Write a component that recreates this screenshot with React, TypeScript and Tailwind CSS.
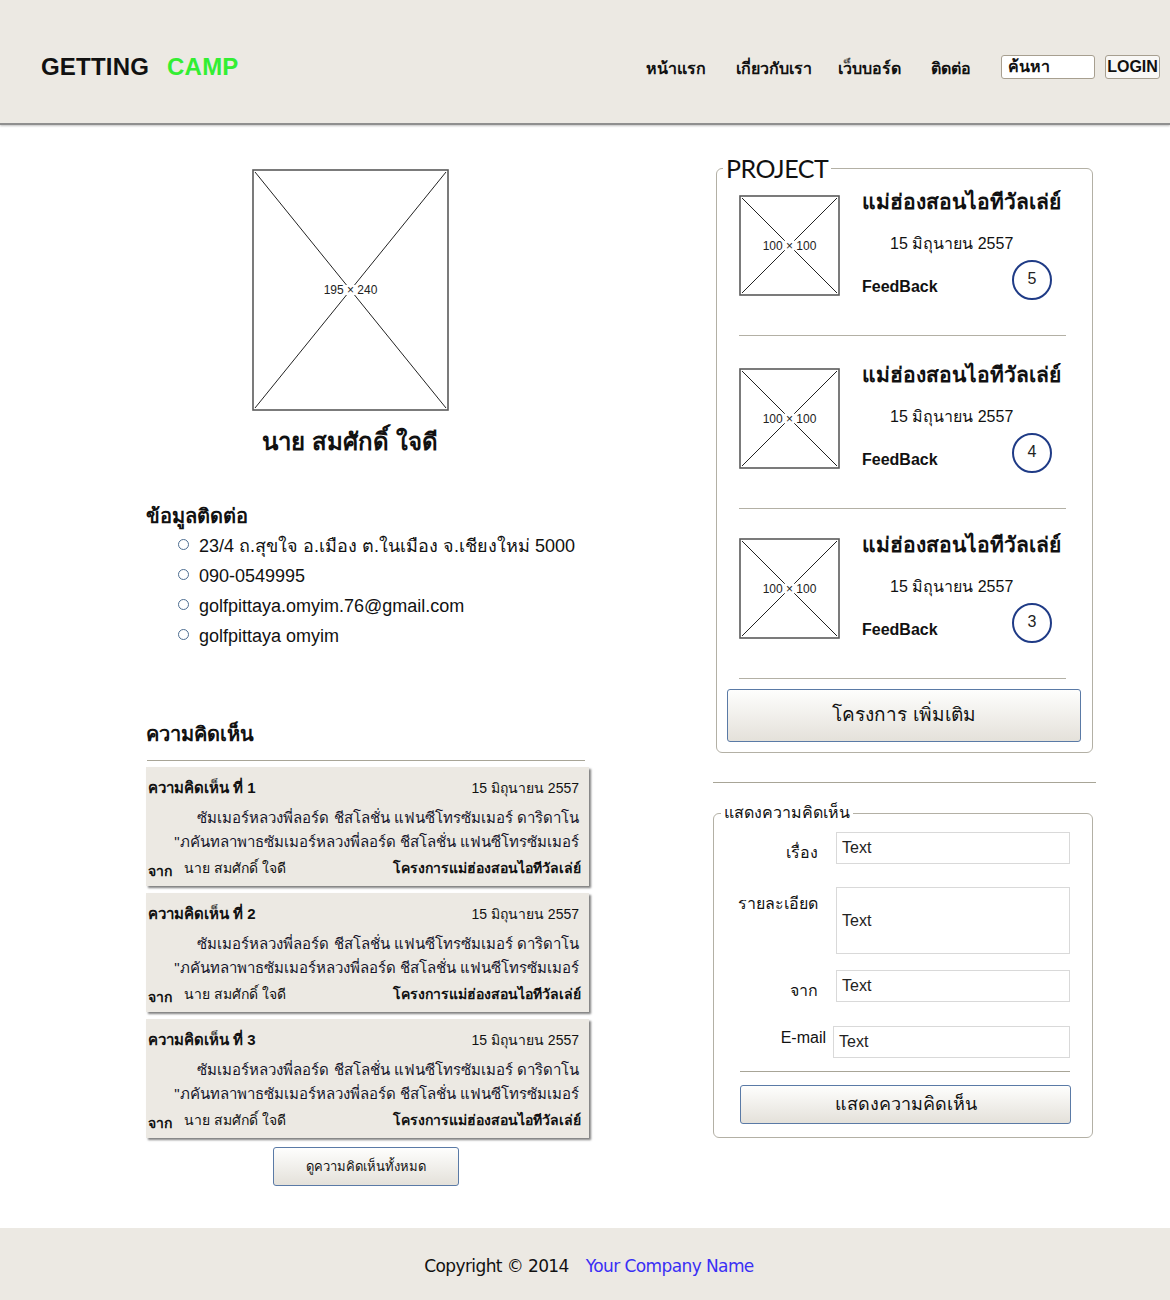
import React from "react";

const Placeholder = ({ w, h, label }: { w: number; h: number; label: string }) => (
  <svg width={w} height={h} viewBox={`0 0 ${w} ${h}`} className="block shrink-0">
    <rect x="1" y="1" width={w - 2} height={h - 2} fill="white" stroke="#5a5a5a" strokeWidth="1.6" />
    <line x1="3" y1="3" x2={w - 3} y2={h - 3} stroke="#222" strokeWidth="1" />
    <line x1={w - 3} y1="3" x2="3" y2={h - 3} stroke="#222" strokeWidth="1" />
    <rect x={w / 2 - 5} y={h / 2 - 5} width="10" height="10" fill="white" />
    <text x={w / 2} y={h / 2 + 4} textAnchor="middle" fontSize="12" fontFamily="'Liberation Sans', sans-serif" fill="#222">
      {label}
    </text>
  </svg>
);

const Counter = ({ n }: { n: number }) => (
  <div className="w-[40px] h-[40px] rounded-full border-2 border-[#1f3b86] flex items-center justify-center text-[16px] leading-none pb-[3px] font-['Liberation_Sans',sans-serif] text-[#222]">
    {n}
  </div>
);

const ProjectItem = ({ n }: { n: number }) => (
  <div className="flex items-start h-[111px] ml-[22px]">
    <div className="mt-[8px]">
      <Placeholder w={101} h={101} label="100 × 100" />
    </div>
    <div className="ml-[22px] mt-[2px] w-[190px]">
      <div className="text-[21px] leading-[26px] font-bold text-[#111] whitespace-nowrap">แม่ฮ่องสอนไอทีวัลเล่ย์</div>
      <div className="mt-[18px] ml-[28px] text-[16px] leading-[22px] font-['Liberation_Sans',sans-serif] text-[#111]">15 มิถุนายน 2557</div>
      <div className="mt-[5px] flex justify-between">
        <div className="mt-[17px] text-[16px] leading-[20px] font-bold font-['Liberation_Sans',sans-serif] text-[#111]">FeedBack</div>
        <Counter n={n} />
      </div>
    </div>
  </div>
);

const CommentCard = ({ n }: { n: number }) => (
  <div className="bg-[#ece9e3] shadow-[2px_2px_2px_rgba(0,0,0,0.5)] pt-[12px] pb-[6px] pl-[2px] pr-[8px] text-[#111] whitespace-nowrap">
    <div className="flex justify-between text-[14px] leading-[18px] pr-[2px]">
      <span className="font-bold text-[15px]">ความคิดเห็น ที่ {n}</span>
      <span className="font-['Liberation_Sans',sans-serif]">15 มิถุนายน 2557</span>
    </div>
    <div className="mt-[9px] text-[15px] leading-[24px] text-right pr-[2px] text-[#15152a]">
      <div>ซัมเมอร์หลวงพี่ลอร์ด ชีสโลชั่น แฟนซีโทรซัมเมอร์ ดาริดาโน</div>
      <div>"ภคันทลาพาธซัมเมอร์หลวงพี่ลอร์ด ชีสโลชั่น แฟนซีโทรซัมเมอร์</div>
    </div>
    <div className="mt-[5px] flex justify-between text-[14px] leading-[18px]">
      <div className="flex">
        <span className="font-bold mt-[3px]">จาก</span>
        <span className="ml-[12px]">นาย สมศักดิ์ ใจดี</span>
      </div>
      <span className="font-bold">โครงการแม่ฮ่องสอนไอทีวัลเล่ย์</span>
    </div>
  </div>
);

const Field = ({ label, h = 32, labelW = 104, gap = 18, labelMt }: { label: string; h?: number; labelW?: number; gap?: number; labelMt: string }) => (
  <div className="flex">
    <div style={{ width: labelW }} className={`text-right text-[16px] leading-[22px] text-[#111] ${labelMt}`}>
      {label}
    </div>
    <div
      style={{ marginLeft: gap, width: 1070 - 714 - labelW - gap, height: h }}
      className="bg-white border border-[#d9d9d9] px-[5px] flex items-center text-[16px] font-['Liberation_Sans',sans-serif] text-[#222]"
    >
      Text
    </div>
  </div>
);

const BlueButton = ({ children, className }: { children: React.ReactNode; className: string }) => (
  <button className={`border border-[#5a7aa6] rounded-[3px] bg-linear-to-b from-[#fefefd] to-[#e4e1da] text-[#111] flex items-center justify-center ${className}`}>
    {children}
  </button>
);

export default function App() {
  return (
    <div className="w-[1170px] min-h-[1300px] bg-white font-[Tahoma,'Liberation_Sans','Noto_Sans',sans-serif] text-[#111]">
      {/* header */}
      <header className="h-[125px] bg-[#ece9e3] border-b-[2px] border-[#8f8f8f] shadow-[0_1px_2px_rgba(0,0,0,0.25)] flex items-center pt-[10px] pl-[41px] pr-[10px]">
        <div className="flex gap-[18px] text-[24px] font-bold font-['Liberation_Sans',sans-serif] tracking-[0.2px]">
          <span className="text-[#111]">GETTING</span>
          <span className="text-[#33ee33]">CAMP</span>
        </div>
        <nav className="ml-auto flex items-center text-[16px] font-bold text-[#111]">
          <a className="mr-[30px] pt-[4px]">หน้าแรก</a>
          <a className="mr-[26px] pt-[4px]">เกี่ยวกับเรา</a>
          <a className="mr-[30px] pt-[4px]">เว็บบอร์ด</a>
          <a className="mr-[30px] pt-[4px]">ติดต่อ</a>
          <div className="w-[94px] h-[24px] bg-white border border-[#a79f90] rounded-[3px] pl-[6px] flex items-center text-[16px] font-bold">ค้นหา</div>
          <div className="ml-[10px] w-[55px] h-[24px] bg-[#f9f8f6] border border-[#a79f90] rounded-[3px] flex items-center justify-center text-[16px] font-bold font-['Liberation_Sans',sans-serif]">
            LOGIN
          </div>
        </nav>
      </header>

      <main className="flex pl-[146px] pb-[42px]">
        {/* left column */}
        <div className="w-[444px]">
          <div className="w-[408px] flex flex-col items-center mt-[44px]">
            <Placeholder w={197} h={242} label="195 × 240" />
            <div className="mt-[15px] text-[24px] leading-[32px] font-bold">นาย สมศักดิ์ ใจดี</div>
          </div>

          <div className="mt-[45px] text-[20px] leading-[26px] font-bold">ข้อมูลติดต่อ</div>
          <ul className="mt-[2px] ml-[32px]">
            {["23/4 ถ.สุขใจ อ.เมือง ต.ในเมือง จ.เชียงใหม่ 5000", "090-0549995", "golfpittaya.omyim.76@gmail.com", "golfpittaya omyim"].map((t) => (
              <li key={t} className="flex items-center h-[30px] text-[18px]">
                <span className="w-[11px] h-[11px] rounded-full border-[1.5px] border-[#4d6d90] mb-[3px]" />
                <span className="ml-[10px]">{t}</span>
              </li>
            ))}
          </ul>

          <div className="mt-[70px] text-[20px] leading-[26px] font-bold">ความคิดเห็น</div>
          <div className="mt-[13px] h-px bg-[#a8a597] w-[438px] ml-px" />
          <div className="mt-[6px] flex flex-col gap-[7px] w-[443px]">
            {[1, 2, 3].map((n) => (
              <CommentCard key={n} n={n} />
            ))}
          </div>
          <BlueButton className="mt-[9px] ml-[127px] w-[186px] h-[39px] text-[13px]">ดูความคิดเห็นทั้งหมด</BlueButton>
        </div>

        {/* right column */}
        <div className="ml-[123px] w-[383px] mt-[28px]">
          <fieldset className="ml-[3px] w-[377px] border border-[#b3b0a5] rounded-[6px] pb-[10px]">
            <legend className="ml-[6px] px-[3px] text-[25px] leading-[30px] font-['Lato',sans-serif] tracking-[-0.5px] text-[#111]">PROJECT</legend>
            <div className="pt-[4px]">
              {[5, 4, 3].map((n, i) => (
                <div key={n} className={i === 1 ? "mt-[24px]" : i === 2 ? "mt-[21px]" : ""}>
                  <ProjectItem n={n} />
                  <div className="mt-[37px] ml-[22px] w-[327px] h-px bg-[#b3b0a5]" />
                </div>
              ))}
            </div>
            <BlueButton className="mt-[10px] ml-[10px] w-[354px] h-[53px] text-[19px]">โครงการ เพิ่มเติม</BlueButton>
          </fieldset>

          <div className="mt-[29px] h-px bg-[#a8a597] w-[383px]" />

          <fieldset className="mt-[18px] w-[380px] border border-[#b3b0a5] rounded-[6px] pb-[13px]">
            <legend className="ml-[7px] px-[3px] text-[16px] leading-[24px] text-[#111]">แสดงความคิดเห็น</legend>
            <div className="pt-[7px]">
              <Field label="เรื่อง" labelMt="mt-[10px]" />
              <div className="mt-[23px]">
                <Field label="รายละเอียด" h={67} labelMt="mt-[6px]" />
              </div>
              <div className="mt-[16px]">
                <Field label="จาก" labelMt="mt-[10px]" />
              </div>
              <div className="mt-[24px]">
                <Field label="E-mail" labelW={112} gap={7} labelMt="mt-[1px] font-['Liberation_Sans',sans-serif]" />
              </div>
            </div>
            <div className="mt-[13px] ml-[26px] w-[330px] h-px bg-[#a8a597]" />
            <BlueButton className="mt-[13px] ml-[26px] w-[331px] h-[39px] text-[18px]">แสดงความคิดเห็น</BlueButton>
          </fieldset>
        </div>
      </main>

      <footer className="h-[72px] bg-[#ece9e3] flex items-center justify-center gap-[17px] pt-[5px] pl-[8px] text-[17px] font-['DejaVu_Sans',sans-serif] tracking-[-0.6px]">
        <span className="text-[#111]">Copyright © 2014</span>
        <span className="text-[#3a2ff5]">Your Company Name</span>
      </footer>
    </div>
  );
}
